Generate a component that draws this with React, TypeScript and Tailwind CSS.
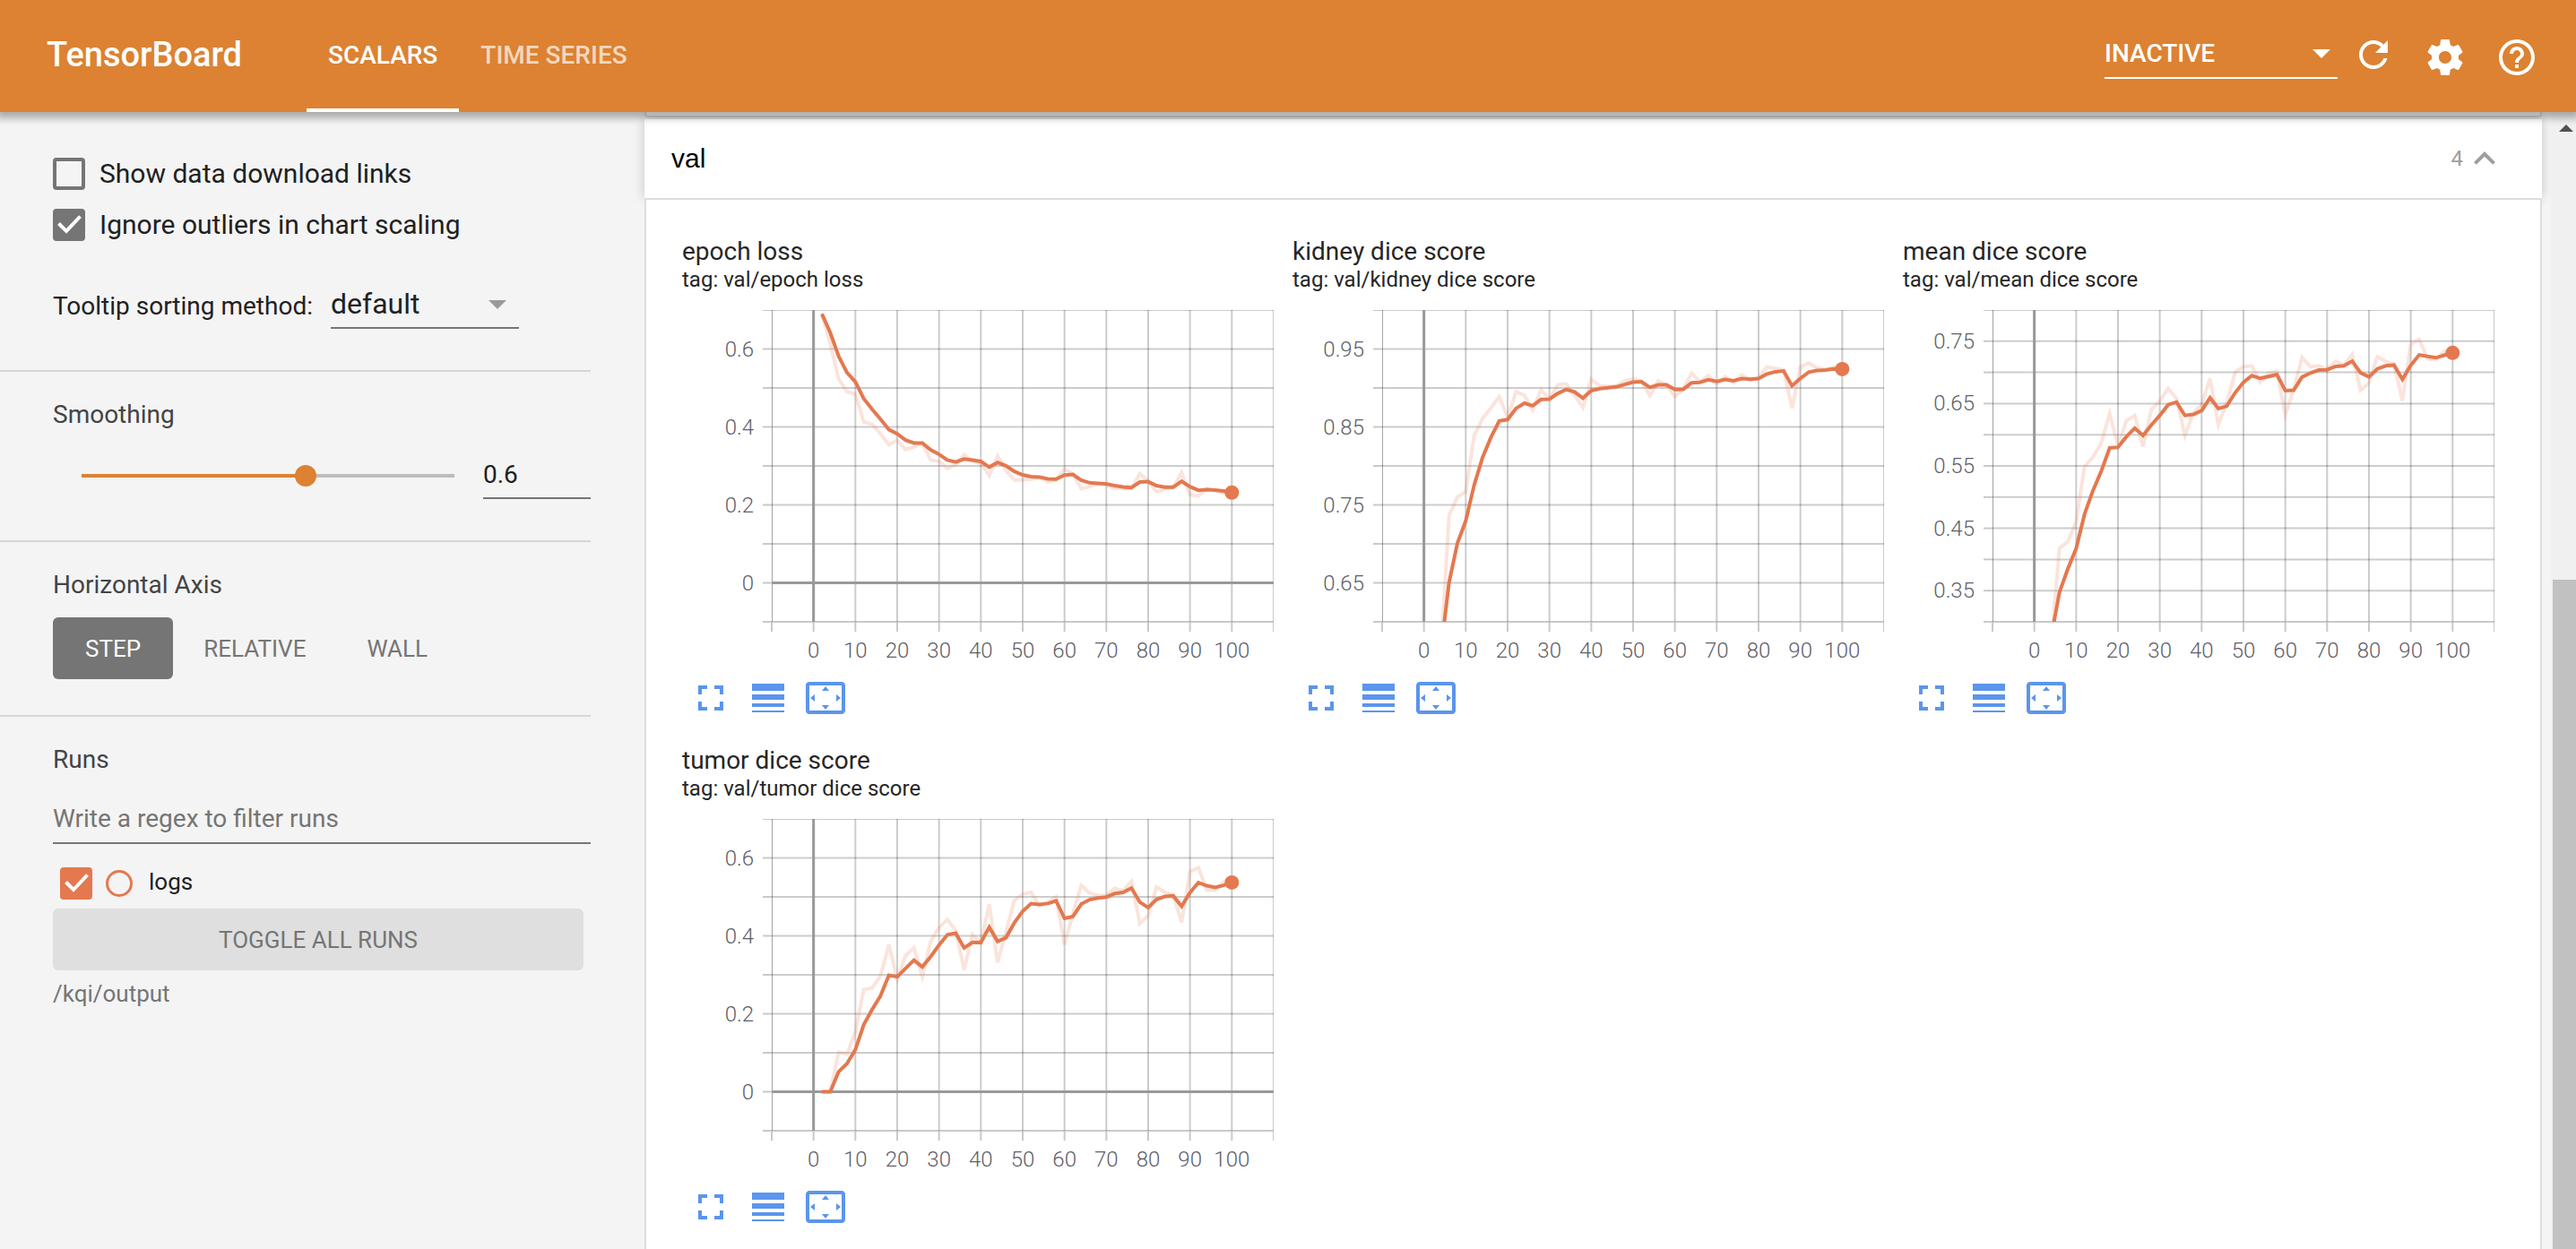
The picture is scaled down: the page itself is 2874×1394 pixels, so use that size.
import { useState } from 'react';
import type { ReactNode } from 'react';

type Scalar = {
  title: string;
  min: number;
  max: number;
  step: number;
  labels: number[];
  digits: number;
  values: number[];
};

/* One value for every second epoch, from epoch 2 to epoch 100. */
const scalars: Scalar[] = [
  {
    title: 'epoch loss',
    min: -0.1,
    max: 0.7,
    step: 0.1,
    labels: [0, 0.2, 0.4, 0.6],
    digits: 1,
    values: [
      0.69, 0.613, 0.523, 0.49, 0.485, 0.413, 0.407, 0.383, 0.354, 0.366, 0.342, 0.348, 0.359, 0.315, 0.312, 0.293,
      0.303, 0.329, 0.311, 0.307, 0.275, 0.326, 0.288, 0.264, 0.264, 0.266, 0.27, 0.259, 0.265, 0.292, 0.28, 0.2415,
      0.247, 0.253, 0.252, 0.242, 0.242, 0.2415, 0.28, 0.261, 0.234, 0.24, 0.2455, 0.283, 0.226, 0.2235, 0.2415, 0.2365,
      0.2315, 0.226,
    ],
  },
  {
    title: 'kidney dice score',
    min: 0.6,
    max: 1,
    step: 0.05,
    labels: [0.65, 0.75, 0.85, 0.95],
    digits: 2,
    values: [
      0.57, 0.555, 0.7367, 0.76, 0.767, 0.839, 0.8607, 0.874, 0.889, 0.862, 0.895, 0.8906, 0.872, 0.8976, 0.886, 0.904,
      0.9054, 0.8906, 0.875, 0.911, 0.903, 0.902, 0.903, 0.909, 0.912, 0.9087, 0.89, 0.909, 0.904, 0.889, 0.899, 0.919,
      0.908, 0.916, 0.905, 0.9145, 0.9067, 0.9165, 0.91, 0.913, 0.927, 0.925, 0.923, 0.874, 0.927, 0.932, 0.9255, 0.924,
      0.9265, 0.924,
    ],
  },
  {
    title: 'mean dice score',
    min: 0.3,
    max: 0.8,
    step: 0.05,
    labels: [0.35, 0.45, 0.55, 0.65, 0.75],
    digits: 2,
    values: [
      0.294, 0.262, 0.418, 0.4286, 0.46, 0.549, 0.564, 0.5867, 0.634, 0.5816, 0.622, 0.631, 0.581, 0.641, 0.654, 0.674,
      0.658, 0.599, 0.635, 0.648, 0.69, 0.616, 0.6514, 0.7, 0.709, 0.7105, 0.684, 0.698, 0.701, 0.632, 0.6725, 0.724,
      0.709, 0.7105, 0.705, 0.7177, 0.712, 0.729, 0.6714, 0.683, 0.725, 0.7177, 0.7136, 0.6545, 0.745, 0.753, 0.722,
      0.72, 0.7336, 0.737,
    ],
  },
  {
    title: 'tumor dice score',
    min: -0.1,
    max: 0.7,
    step: 0.1,
    labels: [0, 0.2, 0.4, 0.6],
    digits: 1,
    values: [
      0, 0, 0.101, 0.097, 0.154, 0.262, 0.266, 0.297, 0.377, 0.289, 0.349, 0.369, 0.295, 0.386, 0.421, 0.442, 0.4136,
      0.3126, 0.404, 0.382, 0.481, 0.332, 0.409, 0.491, 0.507, 0.512, 0.477, 0.487, 0.4996, 0.3774, 0.457, 0.529, 0.51,
      0.504, 0.503, 0.522, 0.5156, 0.54, 0.432, 0.452, 0.525, 0.512, 0.505, 0.435, 0.5645, 0.575, 0.517, 0.517, 0.538,
      0.548,
    ],
  },
];

/* Exponential moving average with the start-up bias removed. */
function smooth(values: number[], weight: number): number[] {
  let last = 0;
  return values.map((value, i) => {
    last = last * weight + (1 - weight) * value;
    return last / (1 - Math.pow(weight, i + 1));
  });
}

const PLOT_LEFT = 100;
const PLOT_WIDTH = 560;
const PLOT_HEIGHT = 348;

function LineChart({ scalar, weight }: { scalar: Scalar; weight: number }) {
  const { title, min, max, step, labels, digits, values } = scalar;
  const x = (epoch: number) => PLOT_LEFT + ((epoch + 10) / 120) * PLOT_WIDTH;
  const y = (value: number) => ((max - value) / (max - min)) * PLOT_HEIGHT;
  const path = (series: number[]) => series.map((v, i) => `${x(2 * i + 2).toFixed(1)},${y(v).toFixed(1)}`).join(' ');
  const rows = Array.from({ length: Math.round((max - min) / step) + 1 }, (_, i) => min + i * step);
  const columns = Array.from({ length: 13 }, (_, i) => i * 10 - 10);
  const smoothed = smooth(values, weight);
  const clip = `clip-${title.replace(/ /g, '-')}`;

  return (
    <svg viewBox="0 0 660 400" className="mt-[19px] block w-full" role="img" aria-label={title}>
      <defs>
        <clipPath id={clip}>
          <rect x={PLOT_LEFT} y={0} width={PLOT_WIDTH} height={PLOT_HEIGHT} />
        </clipPath>
      </defs>
      <g stroke="#c9c9c9" strokeWidth={2}>
        {rows.map((v) => (
          <line key={v} x1={90} x2={PLOT_LEFT} y1={y(v)} y2={y(v)} />
        ))}
        {columns.map((c) => (
          <line key={c} x1={x(c)} x2={x(c)} y1={PLOT_HEIGHT} y2={PLOT_HEIGHT + 11} />
        ))}
        <line x1={90} x2={660} y1={PLOT_HEIGHT} y2={PLOT_HEIGHT} />
      </g>
      <g stroke="#000" strokeOpacity={0.2} strokeWidth={2} clipPath={`url(#${clip})`}>
        {rows.slice(1).map((v) => (
          <line key={v} x1={PLOT_LEFT} x2={660} y1={y(v)} y2={y(v)} />
        ))}
        {columns.map((c) => (
          <line key={c} x1={x(c)} x2={x(c)} y1={0} y2={PLOT_HEIGHT} />
        ))}
        <line x1={PLOT_LEFT} x2={PLOT_LEFT} y1={0} y2={PLOT_HEIGHT} />
      </g>
      <g stroke="#999" strokeWidth={3}>
        <line x1={x(0)} x2={x(0)} y1={0} y2={PLOT_HEIGHT} />
        {min < 0 && <line x1={PLOT_LEFT} x2={660} y1={y(0)} y2={y(0)} />}
      </g>
      <g fill="none" stroke="#e4784f" strokeWidth={4} clipPath={`url(#${clip})`}>
        <polyline points={path(values)} strokeOpacity={0.2} />
        <polyline points={path(smoothed)} />
      </g>
      <circle cx={x(100)} cy={y(smoothed[smoothed.length - 1])} r={8} fill="#e4784f" />
      <g className="fill-[#5f5e69] text-[24px] font-light">
        {labels.map((v) => (
          <text key={v} x={80} y={y(v) + 8} textAnchor="end">
            {v === 0 ? '0' : v.toFixed(digits)}
          </text>
        ))}
        {columns.slice(1, -1).map((c) => (
          <text key={c} x={x(c)} y={388} textAnchor="middle">
            {c}
          </text>
        ))}
      </g>
    </svg>
  );
}

function IconButton({ label, children, className = '' }: { label: string; children: ReactNode; className?: string }) {
  return (
    <button type="button" aria-label={label} className={className}>
      <svg viewBox="0 0 24 24" className="block size-12" fill="currentColor">
        {children}
      </svg>
    </button>
  );
}

function ChartCard({ scalar, weight }: { scalar: Scalar; weight: number }) {
  return (
    <article className="w-[660px] text-[#262626]">
      <h3 className="text-[28px] leading-8">{scalar.title}</h3>
      <p className="text-[24px] leading-[30px]">tag: val/{scalar.title}</p>
      <LineChart scalar={scalar} weight={weight} />
      <div className="mt-[9px] flex gap-4 pl-2 text-[#5b95ec]">
        <IconButton label="Toggle full size">
          <path d="M7 14H5v5h5v-2H7v-3zm-2-4h2V7h3V5H5v5zm12 7h-3v2h5v-5h-2v3zM14 5v2h3v3h2V5h-5z" />
        </IconButton>
        <IconButton label="Toggle y-axis log scale">
          <path d="M3 4h18v4H3zM3 10h18v3H3zM3 15h18v2H3zM3 19h18v1H3z" />
        </IconButton>
        <IconButton label="Fit domain to data">
          <path d="M12.01 5.5L10 8h4l-1.99-2.5zM18 10v4l2.5-1.99L18 10zM6 10l-2.5 2.01L6 14v-4zm8 6h-4l2.01 2.5L14 16zm7-13H3c-1.1 0-2 .9-2 2v14c0 1.1.9 2 2 2h18c1.1 0 2-.9 2-2V5c0-1.1-.9-2-2-2zm0 16.01H3V4.99h18v14.02z" />
        </IconButton>
      </div>
    </article>
  );
}

function Checkbox({
  id,
  checked,
  onChange,
  orange = false,
}: {
  id: string;
  checked: boolean;
  onChange: (checked: boolean) => void;
  orange?: boolean;
}) {
  return (
    <span className="grid size-9 shrink-0">
      <input
        id={id}
        type="checkbox"
        checked={checked}
        onChange={(e) => onChange(e.target.checked)}
        className={
          orange
            ? 'col-start-1 row-start-1 size-9 appearance-none rounded-[4px] border-4 border-[#e4784f] checked:bg-[#e4784f]'
            : 'col-start-1 row-start-1 size-9 appearance-none rounded-[4px] border-4 border-[#757575] checked:bg-[#757575]'
        }
      />
      {checked && (
        <svg viewBox="0 0 36 36" className="pointer-events-none col-start-1 row-start-1 size-9">
          <path d="M6.5 16.500l8.500 8.500L30.500 8.500" fill="none" stroke="#fff" strokeWidth={4} />
        </svg>
      )}
    </span>
  );
}

const axisModes = ['STEP', 'RELATIVE', 'WALL'];

export default function App() {
  const [tab, setTab] = useState('SCALARS');
  const [links, setLinks] = useState(false);
  const [outliers, setOutliers] = useState(true);
  const [logs, setLogs] = useState(true);
  const [weight, setWeight] = useState(0.6);
  const [axis, setAxis] = useState('STEP');
  const fill = `${weight * 100}%`;

  return (
    <div className="flex h-screen flex-col overflow-hidden bg-[#f4f4f4] font-[Roboto,sans-serif] text-[#212121]">
      <header className="relative z-10 flex h-[125px] shrink-0 items-center bg-[#dc8232] text-white shadow-[0_3px_8px_4px_rgba(0,0,0,0.3)]">
        <h1 className="w-[342px] pb-[2px] pl-[52px] text-[38px] font-medium">TensorBoard</h1>
        <nav className="flex self-stretch text-[28px] font-medium">
          {['SCALARS', 'TIME SERIES'].map((name) => (
            <button
              key={name}
              type="button"
              onClick={() => setTab(name)}
              className={
                tab === name
                  ? 'border-b-4 border-white px-6 pt-[2px]'
                  : 'border-b-4 border-transparent px-6 pt-[2px] text-white/70'
              }
            >
              {name}
            </button>
          ))}
        </nav>
        <div className="ml-auto flex items-center pr-[42px] pb-1">
          <div className="relative w-[260px]">
            <select
              aria-label="Plugin"
              className="block h-[55px] w-full appearance-none border-b-2 border-white bg-transparent text-[28px] font-medium text-white"
            >
              <option>INACTIVE</option>
            </select>
            <svg viewBox="0 0 20 10" className="pointer-events-none absolute top-[22px] right-2 h-[10px] w-5">
              <path d="M0 0h20L10 10z" fill="#fff" />
            </svg>
          </div>
          <IconButton label="Reload" className="ml-4">
            <path d="M17.65 6.35C16.2 4.9 14.21 4 12 4c-4.42 0-7.99 3.58-7.99 8s3.57 8 7.99 8c3.73 0 6.84-2.55 7.73-6h-2.08c-.82 2.33-3.04 4-5.65 4-3.31 0-6-2.69-6-6s2.69-6 6-6c1.66 0 3.14.69 4.22 1.780L13 11h7V4l-2.350 2.350z" />
          </IconButton>
          <IconButton label="Settings" className="mt-1.5 ml-8">
            <path d="M19.43 12.98c.04-.32.07-.64.07-.98s-.03-.66-.07-.98l2.11-1.65c.19-.15.24-.42.12-.64l-2-3.46c-.12-.22-.39-.3-.61-.22l-2.49 1c-.52-.4-1.08-.73-1.69-.98l-.38-2.65C14.46 2.18 14.25 2 14 2h-4c-.25 0-.46.18-.49.42l-.38 2.65c-.61.25-1.17.59-1.69.98l-2.49-1c-.23-.09-.49 0-.61.22l-2 3.46c-.13.22-.07.49.12.64l2.11 1.65c-.04.32-.07.65-.07.98s.03.66.07.98l-2.11 1.65c-.19.15-.24.42-.12.64l2 3.46c.12.22.39.3.61.22l2.49-1c.52.4 1.080.73 1.69.98l.38 2.65c.03.24.24.42.49.42h4c.25 0 .46-.18.49-.42l.38-2.65c.61-.25 1.17-.59 1.69-.98l2.49 1c.23.09.49 0 .61-.22l2-3.46c.12-.22.07-.49-.12-.64l-2.11-1.65zM12 15.5c-1.93 0-3.5-1.570-3.5-3.5s1.570-3.500 3.500-3.500 3.500 1.570 3.500 3.500-1.570 3.500-3.500 3.500z" />
          </IconButton>
          <IconButton label="Help" className="mt-1.5 ml-8">
            <path d="M11 18h2v-2h-2v2zm1-16C6.48 2 2 6.48 2 12s4.48 10 10 10 10-4.48 10-10S17.52 2 12 2zm0 18c-4.41 0-8-3.590-8-8s3.590-8 8-8 8 3.590 8 8-3.590 8-8 8zm0-14c-2.210 0-4 1.790-4 4h2c0-1.100.9-2 2-2s2 .9 2 2c0 2-3 1.750-3 5h2c0-2.250 3-2.500 3-5 0-2.210-1.790-4-4-4z" />
          </IconButton>
        </div>
      </header>

      <div className="flex min-h-0 flex-1">
        <aside className="w-[719px] shrink-0 pr-[60px] text-[28px]">
          <section className="border-b-2 border-[#d6d6d6] pt-[51px] pb-[46px] pl-[59px]">
            <div className="flex flex-col gap-[21px] text-[30px]">
              <div className="flex h-9 items-center gap-4">
                <Checkbox id="links" checked={links} onChange={setLinks} />
                <label htmlFor="links" className="pb-0.5">
                  Show data download links
                </label>
              </div>
              <div className="flex h-9 items-center gap-4">
                <Checkbox id="outliers" checked={outliers} onChange={setOutliers} />
                <label htmlFor="outliers" className="pb-0.5">
                  Ignore outliers in chart scaling
                </label>
              </div>
            </div>
            <div className="mt-11 flex items-center gap-5">
              <label htmlFor="sorting" className="w-[290px] pt-1 whitespace-nowrap">
                Tooltip sorting method:
              </label>
              <div className="relative w-[210px]">
                <select
                  id="sorting"
                  className="block h-[54px] w-full appearance-none border-b-2 border-[#757575] bg-transparent text-[32px]"
                >
                  <option>default</option>
                </select>
                <svg viewBox="0 0 20 10" className="pointer-events-none absolute top-[22px] right-[14px] h-[10px] w-5">
                  <path d="M0 0h20L10 10z" fill="#9a9a9a" />
                </svg>
              </div>
            </div>
          </section>

          <section className="border-b-2 border-[#d6d6d6] pt-8 pb-[46px] pl-[59px]">
            <h2 className="leading-8 text-[#444]">Smoothing</h2>
            <div className="mt-[25px] flex items-center gap-5 pl-5">
              <input
                type="range"
                aria-label="Smoothing weight"
                min={0}
                max={1}
                step={0.001}
                value={weight}
                onChange={(e) => setWeight(Number(e.target.value))}
                style={{
                  backgroundImage: `linear-gradient(to right, #dc8232 ${fill}, #bdbdbd ${fill})`,
                }}
                className="h-6 min-w-0 flex-1 appearance-none bg-[length:calc(100%-24px)_4px] bg-center bg-no-repeat [&::-webkit-slider-thumb]:size-6 [&::-webkit-slider-thumb]:appearance-none [&::-webkit-slider-thumb]:rounded-full [&::-webkit-slider-thumb]:bg-[#dc8232]"
              />
              <input
                type="text"
                aria-label="Smoothing value"
                value={weight}
                onChange={(e) => setWeight(Math.min(0.999, Number(e.target.value) || 0))}
                className="h-[53px] w-[120px] border-b-2 border-[#757575] bg-transparent"
              />
            </div>
          </section>

          <section className="border-b-2 border-[#d6d6d6] pt-8 pb-10 pl-[59px]">
            <h2 className="leading-8 text-[#444]">Horizontal Axis</h2>
            <div className="mt-5 flex text-[26px]">
              {axisModes.map((mode) => (
                <button
                  key={mode}
                  type="button"
                  onClick={() => setAxis(mode)}
                  className={
                    axis === mode
                      ? 'h-[69px] rounded-[6px] bg-[#757575] px-9 pt-[2px] text-white'
                      : 'h-[69px] rounded-[6px] px-[34px] pt-[2px] text-[#757575]'
                  }
                >
                  {mode}
                </button>
              ))}
            </div>
          </section>

          <section className="pt-8 pl-[59px]">
            <h2 className="leading-8 text-[#444]">Runs</h2>
            <input
              type="text"
              aria-label="Filter runs"
              placeholder="Write a regex to filter runs"
              className="mt-[23px] block h-[55px] w-full border-b-2 border-[#757575] bg-transparent placeholder:text-[#757575]"
            />
            <div className="mt-[26px] flex h-9 items-center pl-2 text-[26px]">
              <Checkbox id="logs" checked={logs} onChange={setLogs} orange />
              <span className="ml-[15px] size-[30px] rounded-full border-3 border-[#e4784f]" />
              <label htmlFor="logs" className="pb-1 pl-[18px]">
                logs
              </label>
            </div>
            <div className="pr-2 text-[26px] text-[#757575]">
              <button
                type="button"
                onClick={() => setLogs(!logs)}
                className="mt-[10px] block h-[69px] w-full rounded-[6px] bg-[#dfdfdf] pt-[2px]"
              >
                TOGGLE ALL RUNS
              </button>
              <p className="mt-[10px] leading-8">/kqi/output</p>
            </div>
          </section>
        </aside>

        <main className="flex min-w-0 flex-1 flex-col pr-[10px]">
          <div className="h-[6px] shrink-0 rounded-b-[4px] border-2 border-t-0 border-[#ddd] bg-white" />
          <button
            type="button"
            className="mt-[2px] flex h-[88px] shrink-0 items-center bg-white pr-10 pl-[30px] shadow-[0_0_12px_rgba(0,0,0,0.2)]"
          >
            <span className="flex-1 pb-[2px] text-left font-['Liberation_Sans',sans-serif] text-[30px] text-black">
              val
            </span>
            <span className="text-[24px] text-[#9e9e9e]">4</span>
            <svg viewBox="0 0 24 24" className="size-12" fill="#9e9e9e">
              <path d="M12 8l-6 6 1.410 1.410L12 10.830l4.590 4.580L18 14z" />
            </svg>
          </button>
          <div className="relative flex flex-1 flex-wrap content-start gap-x-[21px] gap-y-[30px] border-2 border-b-0 border-[#ddd] bg-white pt-[42px] pl-10">
            {scalars.map((scalar) => (
              <ChartCard key={scalar.title} scalar={scalar} weight={weight} />
            ))}
          </div>
        </main>

        <div className="flex w-7 shrink-0 flex-col bg-[#f0f0f0] pl-0.5">
          <svg viewBox="0 0 16 8" className="mt-[14px] ml-[7px] h-2 w-4">
            <path d="M0 8L8 0l8 8z" fill="#505050" />
          </svg>
          <div className="mt-[500px] flex-1 bg-[#c1c1c1]" />
        </div>
      </div>
    </div>
  );
}
